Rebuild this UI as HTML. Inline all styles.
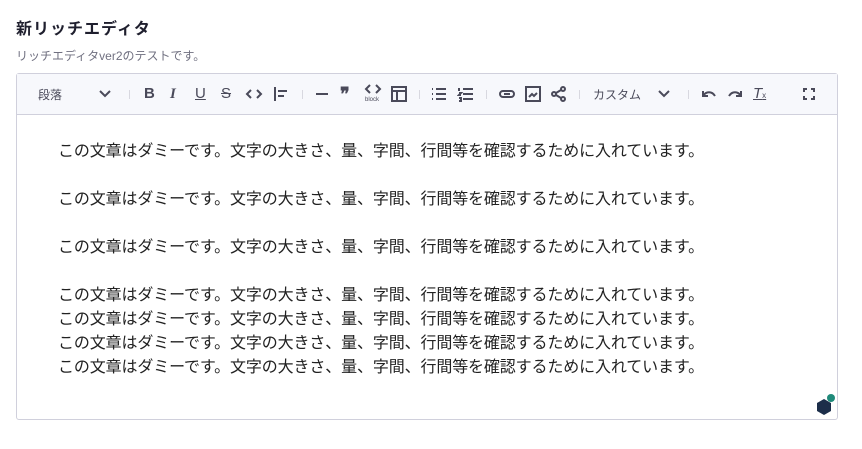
<!DOCTYPE html>
<html><head><meta charset="utf-8"><style>
*{margin:0;padding:0;box-sizing:border-box}
body{width:862px;height:449px;background:#fff;font-family:"Liberation Sans","Noto Sans CJK JP",sans-serif;position:relative;overflow:hidden}
.t{position:absolute;left:16px;top:15px;font-size:16px;font-weight:bold;color:#1f1f2e;letter-spacing:1px}
.s{position:absolute;left:16px;top:47px;font-size:12px;color:#707080}
.ed{position:absolute;left:16px;top:73px;width:822px;height:347px;border:1px solid #d0d0dc;border-radius:3px;background:#fff}
.tb{height:41px;background:#f7f8fc;border-bottom:1px solid #d0d0dc;position:relative}
.i{position:absolute;top:11px;width:18px;height:18px;color:#4a4a5a;font-size:15px;line-height:18px}
.sep{position:absolute;top:16px;width:1px;height:9px;background:#d8d8e0}
.sel{position:absolute;top:12px;font-size:12px;color:#4a4a5a}
.c{position:absolute;left:41px;top:66px;font-size:16px;line-height:24px;color:#222;letter-spacing:-0.13px}
svg{stroke:#4a4a5a;fill:none;stroke-width:2}
</style></head><body>
<div class="t">新リッチエディタ</div>
<div class="s">リッチエディタver2のテストです。</div>
<div class="ed">
<div class="tb">
<span class="sel" style="left:21px">段落</span>
<svg class="i" style="left:79px" viewBox="0 0 18 18"><path d="M4 6l5 5 5-5"/></svg>
<div class="sep" style="left:112px"></div>
<span class="i" style="left:127px;font-weight:bold">B</span>
<span class="i" style="left:153px;font-style:italic;font-weight:bold;font-family:'Liberation Serif'">I</span>
<span class="i" style="left:178px;text-decoration:underline">U</span>
<span class="i" style="left:204px;text-decoration:line-through">S</span>
<svg class="i" style="left:228px" viewBox="0 0 18 18" stroke-width="1.6"><path d="M6 5L2 9l4 4M12 5l4 4-4 4"/></svg>
<svg class="i" style="left:255px" viewBox="0 0 18 18"><path d="M3 2v14M6 6h9M6 11h6"/></svg>
<div class="sep" style="left:285px"></div>
<svg class="i" style="left:296px" viewBox="0 0 18 18"><path d="M3 9h12"/></svg>
<span class="i" style="left:323px;font-weight:bold;font-size:18px">❞</span>
<svg class="i" style="left:347px;top:9px" viewBox="0 0 18 18" stroke-width="1.5"><path d="M6 2L2 6l4 4M12 2l4 4-4 4"/></svg>
<span style="position:absolute;left:348px;top:23px;font-size:6px;color:#4a4a5a">block</span>
<svg class="i" style="left:373px" viewBox="0 0 18 18" stroke-width="1.6"><rect x="2" y="2" width="14" height="14"/><path d="M2 6h14M7 6v10"/></svg>
<div class="sep" style="left:402px"></div>
<svg class="i" style="left:413px" viewBox="0 0 18 18" stroke-width="1.5"><path d="M6 4h10M6 9h10M6 14h10M2 4h1M2 9h1M2 14h1"/></svg>
<svg class="i" style="left:440px" viewBox="0 0 18 18" stroke-width="1.5"><path d="M6 4h10M6 9h10M6 14h10M2 3v3M2 8h2l-2 2h2M2 13h2v3H2"/></svg>
<div class="sep" style="left:469px"></div>
<svg class="i" style="left:481px" viewBox="0 0 18 18" stroke-width="1.8"><rect x="2" y="6" width="14" height="6" rx="3"/><path d="M6 9h6"/></svg>
<svg class="i" style="left:507px" viewBox="0 0 18 18" stroke-width="1.6"><rect x="2" y="2" width="14" height="14"/><path d="M5 12l3-3 2 2 3-3"/></svg>
<svg class="i" style="left:533px" viewBox="0 0 18 18" stroke-width="1.5"><circle cx="13" cy="4" r="2"/><circle cx="4" cy="9" r="2"/><circle cx="13" cy="14" r="2"/><path d="M6 8l5-3M6 10l5 3"/></svg>
<div class="sep" style="left:562px"></div>
<span class="sel" style="left:576px">カスタム</span>
<svg class="i" style="left:638px" viewBox="0 0 18 18"><path d="M4 6l5 5 5-5"/></svg>
<div class="sep" style="left:671px"></div>
<svg class="i" style="left:683px" viewBox="0 0 18 18"><path d="M3 6v5h5M3 11c3-5 9-5 12 0"/></svg>
<svg class="i" style="left:709px" viewBox="0 0 18 18"><path d="M15 6v5h-5M15 11c-3-5-9-5-12 0"/></svg>
<span class="i" style="left:736px;font-style:italic;text-decoration:underline;font-size:15px">T<span style="font-size:8px;font-style:normal;text-decoration:none">x</span></span>
<svg class="i" style="left:783px" viewBox="0 0 18 18" stroke-width="1.6"><path d="M4 7V4h3M11 4h3v3M14 11v3h-3M7 14H4v-3"/></svg>
</div>
<div class="c">この文章はダミーです。文字の大きさ、量、字間、行間等を確認するために入れています。<br><br>この文章はダミーです。文字の大きさ、量、字間、行間等を確認するために入れています。<br><br>この文章はダミーです。文字の大きさ、量、字間、行間等を確認するために入れています。<br><br>この文章はダミーです。文字の大きさ、量、字間、行間等を確認するために入れています。<br>この文章はダミーです。文字の大きさ、量、字間、行間等を確認するために入れています。<br>この文章はダミーです。文字の大きさ、量、字間、行間等を確認するために入れています。<br>この文章はダミーです。文字の大きさ、量、字間、行間等を確認するために入れています。</div>
<div style="position:absolute;left:800px;top:325px;width:14px;height:16px;background:#1c2e4a;clip-path:polygon(50% 0,100% 25%,100% 75%,50% 100%,0 75%,0 25%)"></div>
<div style="position:absolute;left:810px;top:320px;width:8px;height:8px;border-radius:50%;background:#1f8a7a"></div>
</div>
</body></html>
